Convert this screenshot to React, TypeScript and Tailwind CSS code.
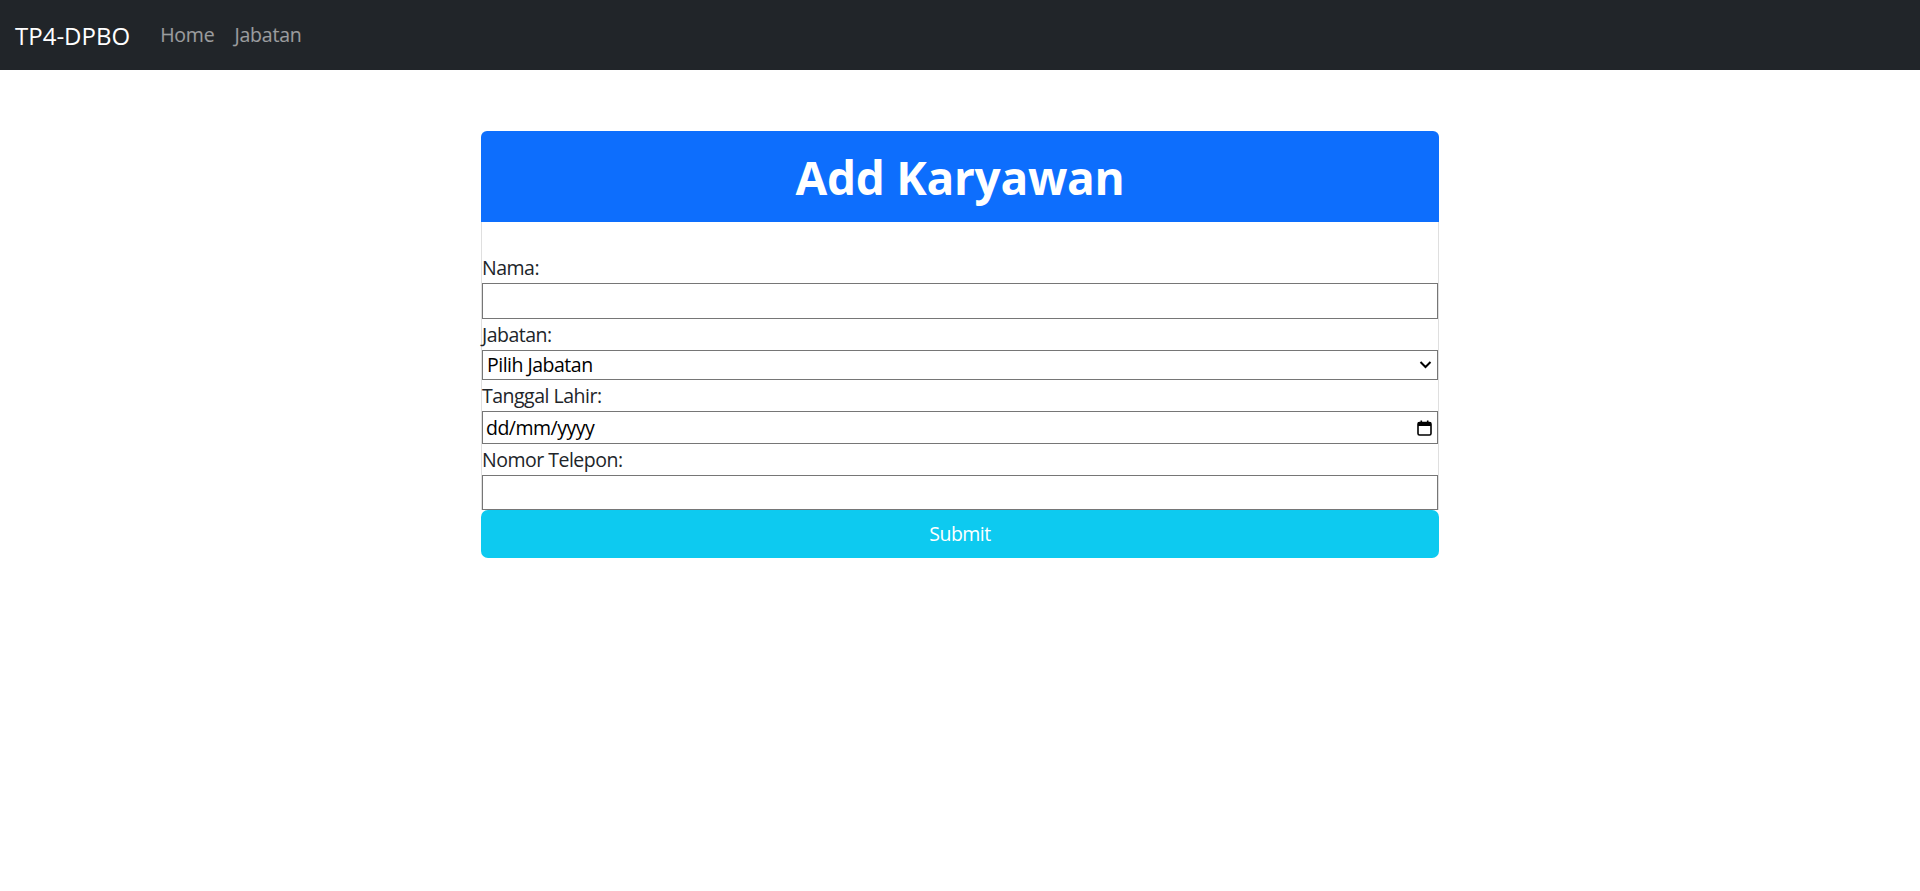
import React from 'react';

const font = { fontFamily: '"Open Sans", "Noto Sans", sans-serif' };

function Navbar() {
  return (
    <nav className="flex h-[70px] items-center bg-[#212529] px-[15px]">
      <span className="mr-[20px] text-[24px] leading-[37px] text-white">TP4-DPBO</span>
      <a className="px-[10px] text-[19.5px] tracking-[-0.2px] text-white/55">Home</a>
      <a className="px-[10px] text-[19.5px] tracking-[-0.2px] text-white/55">Jabatan</a>
    </nav>
  );
}

function CalendarIcon() {
  return (
    <svg width="15" height="16" viewBox="0 0 15 16" fill="none">
      <rect x="1" y="2.5" width="13" height="12.5" rx="1.5" stroke="#000" strokeWidth="1.6" />
      <rect x="1" y="2.5" width="13" height="3.5" fill="#000" />
      <rect x="3.5" y="0.5" width="1.6" height="3" fill="#000" />
      <rect x="9.9" y="0.5" width="1.6" height="3" fill="#000" />
    </svg>
  );
}

function Chevron() {
  return (
    <svg width="13" height="9" viewBox="0 0 13 9" fill="none">
      <path d="M1.5 2l5 5 5-5" stroke="#000" strokeWidth="2" />
    </svg>
  );
}

export default function App() {
  return (
    <div className="min-h-[891px] bg-white text-[#212529]" style={font}>
      <Navbar />

      <div className="flex justify-center pt-[61px]">
        <div className="w-[958px]">
          {/* Header */}
          <div className="flex h-[91px] items-center justify-center rounded-t-[6px] bg-[#0d6efd]">
            <h1 className="text-[46px] font-bold leading-none tracking-[-0.3px] text-white">Add Karyawan</h1>
          </div>

          {/* Body */}
          <form className="border-x border-[#dfdfdf] text-[19.5px] tracking-[-0.5px]">
            <div className="h-[30px]" />

            <label className="block h-[31px] pt-px leading-[30px]">Nama:</label>
            <input type="text" className="block h-[36px] w-full border border-[#767676] px-[3px] text-black outline-none" />

            <label className="block h-[31px] pt-px leading-[30px]">Jabatan:</label>
            <div className="relative h-[30px]">
              <select className="block h-full w-full appearance-none border border-[#767676] bg-white pl-[4px] leading-[28px] text-black outline-none">
                <option>Pilih Jabatan</option>
              </select>
              <span className="pointer-events-none absolute right-[6px] top-[10px] flex">
                <Chevron />
              </span>
            </div>

            <label className="block h-[31px] pt-px leading-[30px]">Tanggal Lahir:</label>
            <div className="flex h-[33px] items-center justify-between border border-[#767676] pl-[3px] pr-[5px] text-black">
              <span>dd/mm/yyyy</span>
              <CalendarIcon />
            </div>

            <label className="block h-[31px] pt-px leading-[30px]">Nomor Telepon:</label>
            <input type="tel" className="block h-[35px] w-full border border-[#767676] px-[3px] text-black outline-none" />
          </form>

          <button className="block h-[48px] w-full rounded-[7px] bg-[#0dcaf0] text-[19.5px] tracking-[-0.5px] text-white">
            Submit
          </button>
        </div>
      </div>
    </div>
  );
}
